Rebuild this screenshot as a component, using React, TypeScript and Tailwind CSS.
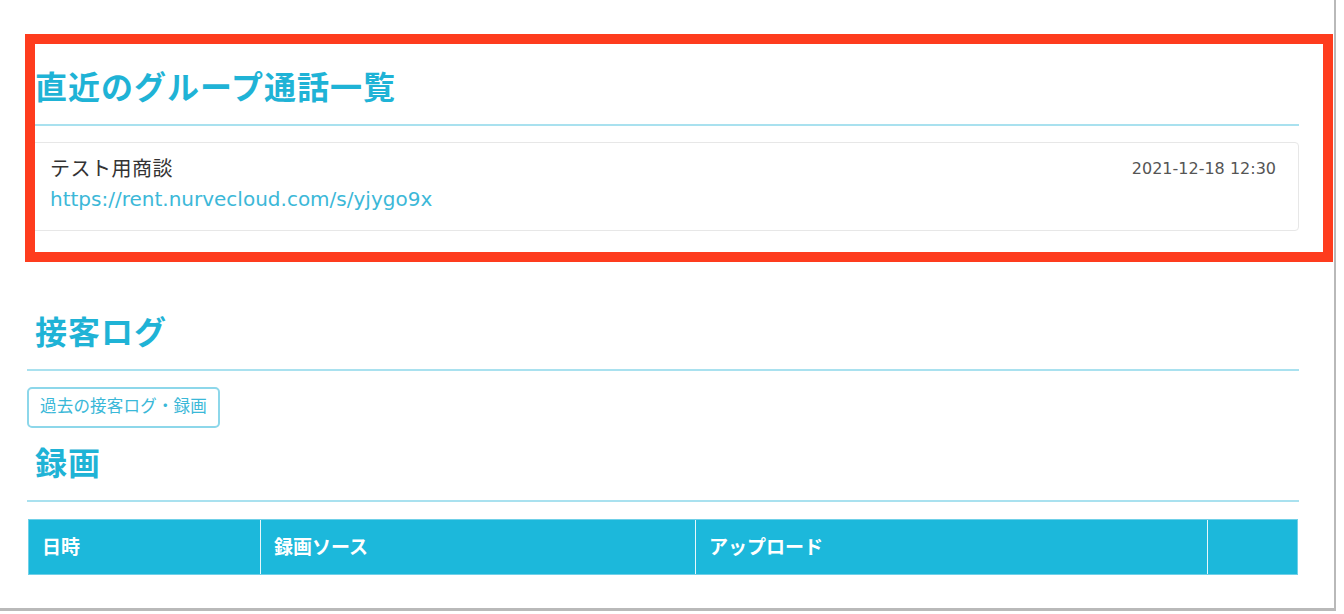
const font = "font-['DejaVu_Sans','Noto_Sans_CJK_JP',sans-serif]";

const SectionTitle = ({ children }: { children: string }) => (
  <h2 className="pl-[8px] pb-4 text-[32px] leading-[40px] font-bold tracking-[1px] text-[#1fb3d6] border-b-2 border-[#a9e1ef]">
    {children}
  </h2>
);

const columns = [
  { label: "日時", width: "w-[231px]" },
  { label: "録画ソース", width: "w-[435px]" },
  { label: "アップロード", width: "w-[512px]" },
  { label: "", width: "flex-1" },
];

export default function App() {
  return (
    <div className={`relative w-[1344px] h-[614px] bg-white overflow-hidden ${font}`}>
      <div className="w-[1336px] h-[611px] border-r-2 border-b-[3px] border-[#b9b9b9] pl-[27px] pr-[35px] pt-[68px]">
        <section>
          <SectionTitle>直近のグループ通話一覧</SectionTitle>
          <div className="mt-4 h-[89px] rounded border border-[#e7e7e7] px-[22px] pt-[11px] flex justify-between">
            <div className="text-[20px] leading-[30px]">
              <p className="text-[#333] tracking-[0.5px]">テスト用商談</p>
              <a className="text-[#3cb8d8]">https://rent.nurvecloud.com/s/yjygo9x</a>
            </div>
            <p className="text-[16px] leading-[30px] text-[#555]">2021-12-18 12:30</p>
          </div>
        </section>

        <section className="mt-[82px]">
          <SectionTitle>接客ログ</SectionTitle>
          <button className="mt-4 h-[41px] px-[11px] rounded-[5px] border-2 border-solid border-[#8dd7ea] text-[16.5px] tracking-[0.2px] text-[#3ab8d8]">
            過去の接客ログ・録画
          </button>
          <div className="mt-4">
            <SectionTitle>録画</SectionTitle>
          </div>
          <div className="mt-[17px] mx-px h-[56px] flex bg-[#1cb8db] border border-[#6fd0e8]">
            {columns.map((c, i) => (
              <div
                key={i}
                className={`${c.width} flex items-center px-[13px] text-[19px] font-bold text-white ${i > 0 ? "border-l border-[#e6f7fb]" : ""}`}
              >
                {c.label}
              </div>
            ))}
          </div>
        </section>
      </div>

      <div className="absolute left-[25px] top-[34px] w-[1308px] h-[228px] border-[10px] border-[#fe3c1e]" />
    </div>
  );
}
